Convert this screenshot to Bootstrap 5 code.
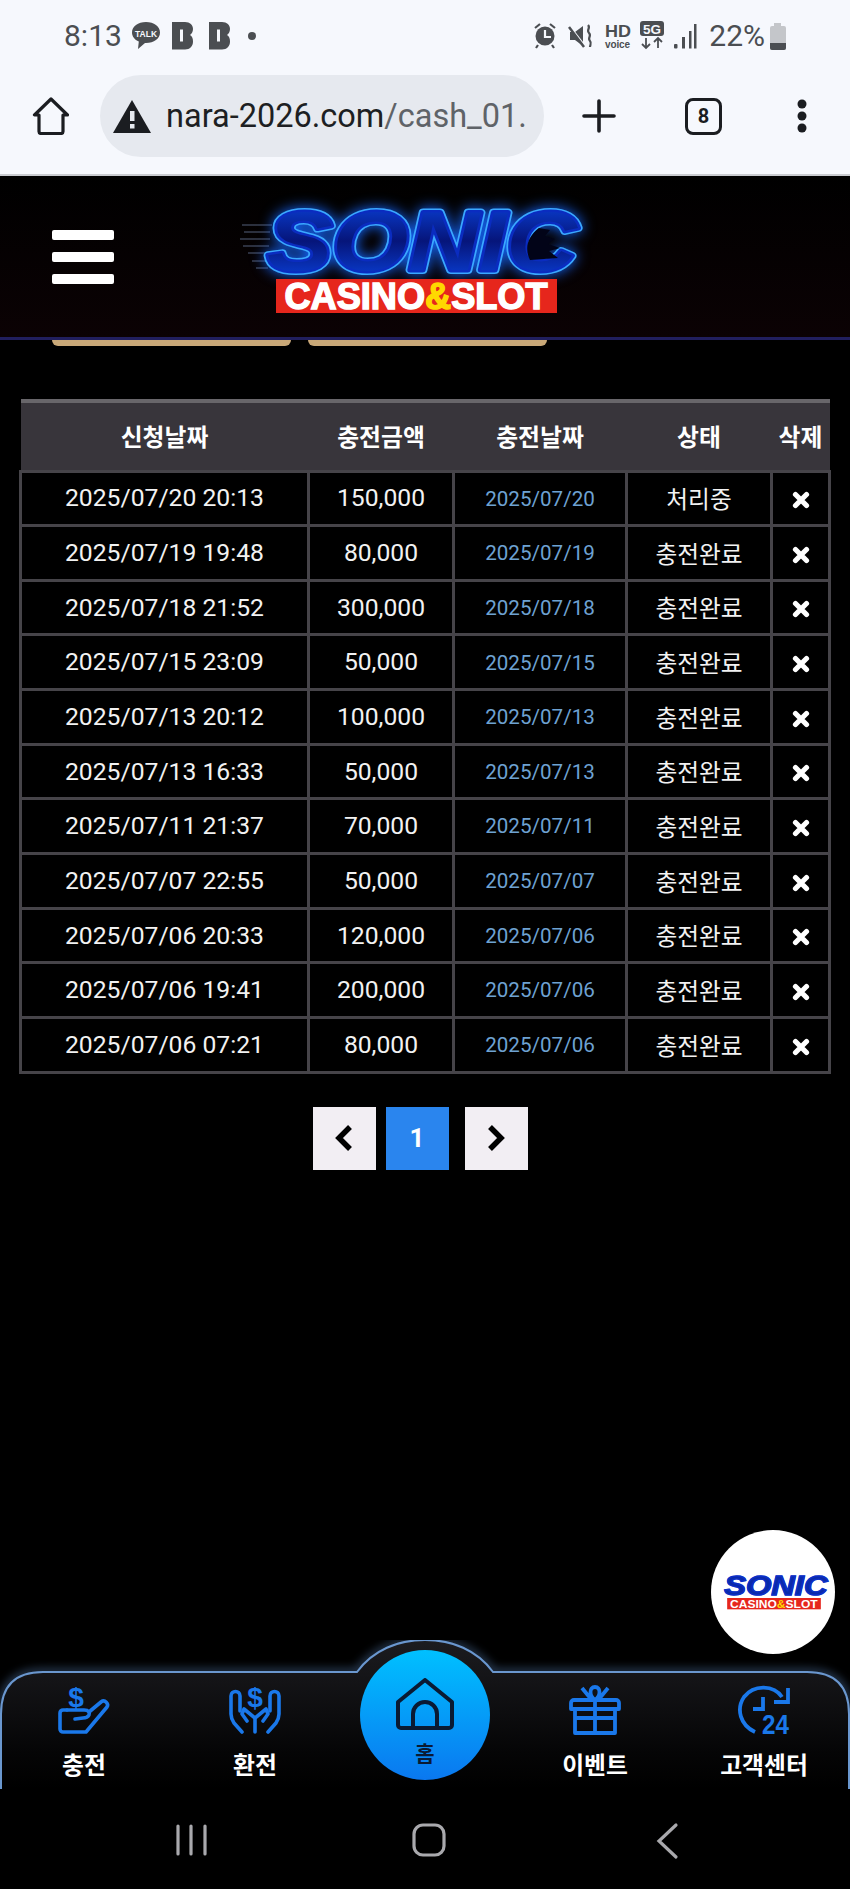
<!DOCTYPE html>
<html lang="ko">
<head>
<meta charset="UTF-8" />
<meta name="viewport" content="width=device-width, initial-scale=1" />
<title>Sonic Casino - 충전내역</title>
<link href="https://cdn.jsdelivr.net/npm/bootstrap@5.3.0/dist/css/bootstrap.min.css" rel="stylesheet" />
<style>
    body { background: #000; font-family: Roboto, "Noto Sans CJK KR", sans-serif; height: 1889px; overflow: hidden; }
    .shell { height: 1889px; }

    /* phone + browser chrome */
    .phone-top { background: #f6f8fd; height: 176px; border-bottom: 2px solid #c9cbd0; color: #4b4e52; }
    .status-row { height: 72px; padding: 0 63px 0 64px; }
    .clock { font-size: 30px; line-height: 1; }
    .battery-txt { font-size: 30px; line-height: 1; margin-left: 11px; }
    .tool-row { height: 82px; margin-top: 3px; padding-left: 32px; color: #1b1d21; }
    .url-pill { width: 444px; height: 82px; background: #e6e9ef; border-radius: 41px; margin-left: 30px; padding-left: 13px; overflow: hidden; }
    .url-txt { font-size: 32.5px; white-space: nowrap; color: #1d1f23; margin-left: 15px; }
    .url-txt span { color: #5f6368; }
    .tool-plus { margin-left: 38px; }
    .tab-count { width: 37px; height: 37px; margin-left: 69px; border: 3.5px solid #1b1d21; border-radius: 8px; font-size: 20px; font-weight: 700; color: #1b1d21; }
    .tool-dots { margin-left: 74px; }

    /* site header */
    .site-head { height: 164px; background: linear-gradient(#000, #0b0204); border-bottom: 3px solid #211f5e; padding-left: 52px; }
    .burger { width: 62px; }
    .burger i { display: block; height: 10px; background: #fff; border-radius: 2px; }
    .burger i + i { margin-top: 12px; }
    .head-logo { margin-left: 126px; margin-top: 8px; overflow: visible; }

    .tab-stubs { padding-left: 52px; gap: 17px; }
    .tab-stubs i { display: block; width: 239px; height: 6px; background: #c9a878; border-radius: 0 0 8px 8px; }

    /* table */
    .list-wrap { padding: 53px 0 0 19px; }
    .cash-table { table-layout: fixed; width: 809px; margin: 0; border-collapse: collapse; --bs-table-bg: #000; --bs-table-color: #fff; --bs-table-border-color: #464449; }
    .cash-table th { background: #38353b; color: #fff; border: 0; border-top: 4px solid #68666a; border-bottom: 3px solid #464449; height: 70px; font-size: 23.8px; font-weight: 700; padding: 0; vertical-align: middle; font-family: "Noto Sans CJK KR", sans-serif; }
    .cash-table td { height: 54.66px; border: 3px solid #464449; padding: 1px 0 0; font-size: 24.7px; color: #f2f2f2; line-height: 1; }
    .cash-table .apply-day { font-size: 20.6px; color: #6ea2d2; }
    .cash-table .stat { font-size: 23.7px; font-family: "Noto Sans CJK KR", sans-serif; }
    .c-a { width: 288px; } .c-b { width: 145px; } .c-c { width: 173px; } .c-d { width: 145px; } .c-e { width: 58px; }

    .pager { margin-top: 33px; padding-right: 29px; }
    .pg-box { width: 63px; height: 63px; background: #f2eef3; color: #000; }
    .pg-on { background: #2a85ee; color: #fff; font-size: 26px; font-weight: 700; margin: 0 16px 0 10px; }

    /* logo layers */
    .sonic-glow { filter: drop-shadow(0 0 7px #1466ff); }

    /* bottom nav */
    .float-logo { position: absolute; left: 711px; top: 1530px; width: 124px; height: 124px; background: #fff; border-radius: 50%; }
    .float-logo svg { overflow: visible; }
    .bottom-nav { position: relative; height: 149px; }
    .nav-shape { position: absolute; left: 0; top: 0; }
    .nav-items { position: relative; height: 149px; }
    .nav-cell { position: absolute; top: 45px; width: 170px; color: #fff; font-size: 23.8px; font-weight: 700; font-family: "Noto Sans CJK KR", sans-serif; text-align: center; line-height: 1; }
    .nav-cell svg { display: block; margin: 0 auto 17px; overflow: visible; }
    .n1 { left: -1px; } .n2 { left: 170px; } .n3 { left: 510px; } .n4 { left: 679px; }
    .home-ball { position: absolute; left: 360px; top: 10px; width: 130px; height: 130px; border-radius: 50%; background: linear-gradient(#00c0ff, #0a78f0); color: #0a1a33; font-size: 21px; font-weight: 700; font-family: "Noto Sans CJK KR", sans-serif; text-align: center; line-height: 1; padding-top: 28px; }
    .home-ball svg { display: block; margin: 0 auto 10px; }
    .sys-nav { height: 100px; }
</style>
</head>
<body>
<svg width="0" height="0" class="position-absolute">
    <symbol id="xmark" viewBox="0 0 18 18"><path d="M3.5 3.5 14.5 14.5M14.5 3.5 3.5 14.5" stroke="#fff" stroke-width="5.2" stroke-linecap="round" fill="none"/></symbol>
    <linearGradient id="sonicFill" x1="0" y1="0" x2="0" y2="1">
        <stop offset="0" stop-color="#0a47e6"/><stop offset=".5" stop-color="#06157a"/><stop offset="1" stop-color="#0a47e6"/>
    </linearGradient>
</svg>

<div class="shell d-flex flex-column">

    <div class="phone-top flex-shrink-0">
        <div class="status-row d-flex align-items-center justify-content-between">
            <div class="d-flex align-items-center">
                <span class="clock">8:13</span>
                <svg width="140" height="32" viewBox="0 0 140 32" class="ms-2">
                    <path d="M16 2C8 2 2 6.500 2 12.500c0 4 2.700 7.300 6.800 9L8 29l7-6h1c8 0 14-4.500 14-10.500S24 2 16 2z" fill="#4b4e52"/>
                    <text x="16" y="16.500" text-anchor="middle" font-family="Liberation Sans" font-size="8.500" font-weight="700" fill="#f6f8fd">TALK</text>
                    <path d="M42 2h13c5 0 8 3 8 7 0 3-1.500 5-3 6 2 1 3 3.500 3 6.500 0 4.500-3 8-8 8H42zM50 9.500v12h3v-12z" fill="#4b4e52" fill-rule="evenodd"/>
                    <path d="M79 2h13c5 0 8 3 8 7 0 3-1.500 5-3 6 2 1 3 3.500 3 6.500 0 4.500-3 8-8 8H79zM87 9.500v12h3v-12z" fill="#4b4e52" fill-rule="evenodd"/>
                    <circle cx="122" cy="16" r="4" fill="#4b4e52"/>
                </svg>
            </div>
            <div class="d-flex align-items-center">
                <svg width="164" height="30" viewBox="0 0 164 30" fill="#4b4e52">
                    <circle cx="11" cy="15" r="9.500"/><path d="M11 9v7h6" stroke="#f6f8fd" stroke-width="2.200" fill="none"/>
                    <path d="M1 7l5-4M21 7l-5-4M4 24l-2 3M18 24l2 3" stroke="#4b4e52" stroke-width="2.200"/>
                    <path d="M36 11h5l8-6v20l-8-6h-5z"/><path d="M35 4l17 22" stroke="#f6f8fd" stroke-width="1.500"/><path d="M35 6l15 20" stroke="#4b4e52" stroke-width="2.500"/>
                    <path d="M54 4c3 3-2 5 1 8 3 3-2 5 1 8 2 2 0 4 0 6" stroke="#4b4e52" stroke-width="2.200" fill="none"/>
                    <text x="71" y="16" font-family="Liberation Sans" font-size="17" font-weight="700" textLength="26" lengthAdjust="spacingAndGlyphs">HD</text>
                    <text x="71" y="27" font-family="Liberation Sans" font-size="10" font-weight="700" textLength="25">voice</text>
                    <rect x="106" y="0" width="24" height="15" rx="3"/>
                    <text x="118" y="12.500" text-anchor="middle" font-family="Liberation Sans" font-size="13.500" font-weight="700" fill="#f6f8fd">5G</text>
                    <path d="M112 17v10m-4-4 4 4 4-4M124 27V17m-4 4 4-4 4 4" stroke="#4b4e52" stroke-width="1.800" fill="none"/>
                    <rect x="140" y="23" width="3.500" height="4.500" rx="1"/><rect x="148" y="16" width="3" height="11.500"/><rect x="155" y="10" width="2.500" height="17.500"/><rect x="160" y="3" width="2.500" height="24.500"/>
                </svg>
                <span class="battery-txt">22%</span>
                <svg width="18" height="27" viewBox="0 0 18 27" class="ms-1"><path d="M5 0h7v3h3a2 2 0 0 1 2 2v20a2 2 0 0 1-2 2H3a2 2 0 0 1-2-2V5a2 2 0 0 1 2-2h2z" fill="#c4c6ca"/><path d="M1 20h16v5a2 2 0 0 1-2 2H3a2 2 0 0 1-2-2z" fill="#4b4e52"/></svg>
            </div>
        </div>
        <div class="tool-row d-flex align-items-center position-relative">
            <svg width="38" height="38" viewBox="0 0 38 38" class="flex-shrink-0" fill="none" stroke="#1b1d21" stroke-width="3.200" stroke-linejoin="round"><path d="M19 2 2.500 18H7v16.500a2 2 0 0 0 2 2h20a2 2 0 0 0 2-2V18h4.500z"/></svg>
            <div class="url-pill d-flex align-items-center flex-shrink-0">
                <svg width="38" height="33" viewBox="0 0 38 33" class="flex-shrink-0"><path d="M19 0 38 33H0z" fill="#1b1d21"/><rect x="17" y="11" width="4.500" height="10" fill="#e6e9ef"/><rect x="17" y="24" width="4.500" height="4.500" fill="#e6e9ef"/></svg>
                <div class="url-txt">nara-2026.com<span>/cash_01.</span></div>
            </div>
            <svg width="34" height="34" viewBox="0 0 34 34" class="flex-shrink-0 tool-plus" stroke="#1b1d21" stroke-width="3.600" stroke-linecap="round"><path d="M17 2v30M2 17h30"/></svg>
            <div class="tab-count d-flex align-items-center justify-content-center flex-shrink-0">8</div>
            <svg width="12" height="34" viewBox="0 0 12 34" class="flex-shrink-0 tool-dots" fill="#1b1d21"><circle cx="6" cy="5" r="4.500"/><circle cx="6" cy="17" r="4.500"/><circle cx="6" cy="29" r="4.500"/></svg>
        </div>
    </div>

    <header class="site-head d-flex align-items-center flex-shrink-0">
        <div class="burger"><i></i><i></i><i></i></div>
        <svg class="head-logo" width="350" height="120" viewBox="0 0 350 120">
            <g stroke="#55607a" stroke-width="1"><path d="M2 24h30M4 31h26M0 38h30M3 45h26M8 52h20M12 60h14M16 67h12"/></g>
            <g class="sonic-glow"><use href="#sonicWord" stroke="#3aa8ff" stroke-width="8" stroke-linejoin="round" fill="#3aa8ff"/></g>
            <use href="#sonicWord" stroke="#0a2cc0" stroke-width="5" stroke-linejoin="round" fill="url(#sonicFill)"/>
            <text id="sonicWord" x="27" y="69" font-family="Liberation Sans" font-weight="700" font-style="italic" font-size="84" textLength="310" lengthAdjust="spacingAndGlyphs" fill="url(#sonicFill)">SONIC</text>
            <path d="M299 27l11 2-5 6 10 3-7 5 12 4-11 3 9 7-28 2c-6-12-2-24 9-32z" fill="#020418"/>
            <rect x="36" y="78" width="281" height="34" fill="#e6261c"/>
            <text x="176" y="108" text-anchor="middle" font-family="Liberation Sans" font-weight="700" font-size="37" textLength="263" lengthAdjust="spacingAndGlyphs" fill="#fff" stroke="#fff" stroke-width="1.500">CASINO<tspan fill="#ffd800" stroke="#ffd800">&amp;</tspan>SLOT</text>
        </svg>
    </header>

    <main class="flex-grow-1">
        <div class="tab-stubs d-flex"><i></i><i></i></div>
        <div class="list-wrap">
            <table class="table cash-table text-center align-middle">
                <colgroup><col class="c-a"><col class="c-b"><col class="c-c"><col class="c-d"><col class="c-e"></colgroup>
                <thead>
                    <tr><th>신청날짜</th><th>충전금액</th><th>충전날짜</th><th>상태</th><th>삭제</th></tr>
                </thead>
                <tbody>
                    <tr><td>2025/07/20 20:13</td><td>150,000</td><td class="apply-day">2025/07/20</td><td class="stat">처리중</td><td><svg width="18" height="18"><use href="#xmark"/></svg></td></tr>
                    <tr><td>2025/07/19 19:48</td><td>80,000</td><td class="apply-day">2025/07/19</td><td class="stat">충전완료</td><td><svg width="18" height="18"><use href="#xmark"/></svg></td></tr>
                    <tr><td>2025/07/18 21:52</td><td>300,000</td><td class="apply-day">2025/07/18</td><td class="stat">충전완료</td><td><svg width="18" height="18"><use href="#xmark"/></svg></td></tr>
                    <tr><td>2025/07/15 23:09</td><td>50,000</td><td class="apply-day">2025/07/15</td><td class="stat">충전완료</td><td><svg width="18" height="18"><use href="#xmark"/></svg></td></tr>
                    <tr><td>2025/07/13 20:12</td><td>100,000</td><td class="apply-day">2025/07/13</td><td class="stat">충전완료</td><td><svg width="18" height="18"><use href="#xmark"/></svg></td></tr>
                    <tr><td>2025/07/13 16:33</td><td>50,000</td><td class="apply-day">2025/07/13</td><td class="stat">충전완료</td><td><svg width="18" height="18"><use href="#xmark"/></svg></td></tr>
                    <tr><td>2025/07/11 21:37</td><td>70,000</td><td class="apply-day">2025/07/11</td><td class="stat">충전완료</td><td><svg width="18" height="18"><use href="#xmark"/></svg></td></tr>
                    <tr><td>2025/07/07 22:55</td><td>50,000</td><td class="apply-day">2025/07/07</td><td class="stat">충전완료</td><td><svg width="18" height="18"><use href="#xmark"/></svg></td></tr>
                    <tr><td>2025/07/06 20:33</td><td>120,000</td><td class="apply-day">2025/07/06</td><td class="stat">충전완료</td><td><svg width="18" height="18"><use href="#xmark"/></svg></td></tr>
                    <tr><td>2025/07/06 19:41</td><td>200,000</td><td class="apply-day">2025/07/06</td><td class="stat">충전완료</td><td><svg width="18" height="18"><use href="#xmark"/></svg></td></tr>
                    <tr><td>2025/07/06 07:21</td><td>80,000</td><td class="apply-day">2025/07/06</td><td class="stat">충전완료</td><td><svg width="18" height="18"><use href="#xmark"/></svg></td></tr>
                </tbody>
            </table>
            <div class="pager d-flex justify-content-center">
                <div class="pg-box d-flex align-items-center justify-content-center"><svg width="20" height="28" viewBox="0 0 20 28" fill="none" stroke="#000" stroke-width="5.500"><path d="M16 3 5 14l11 11"/></svg></div>
                <div class="pg-box pg-on d-flex align-items-center justify-content-center">1</div>
                <div class="pg-box d-flex align-items-center justify-content-center"><svg width="20" height="28" viewBox="0 0 20 28" fill="none" stroke="#000" stroke-width="5.500"><path d="M4 3l11 11L4 25"/></svg></div>
            </div>
        </div>
    </main>

    <div class="float-logo d-flex align-items-center justify-content-center">
        <svg width="117" height="40" viewBox="0 0 350 120">
            <use href="#miniWord" stroke="#2a6cf0" stroke-width="9" stroke-linejoin="round" opacity=".6"/>
            <text id="miniWord" x="27" y="69" font-family="Liberation Sans" font-weight="700" font-style="italic" font-size="84" textLength="310" lengthAdjust="spacingAndGlyphs" fill="#0b2aa8" stroke="#0b2fc8" stroke-width="4">SONIC</text>
            <rect x="36" y="78" width="281" height="34" fill="#e6261c"/>
            <text x="176" y="107" text-anchor="middle" font-family="Liberation Sans" font-weight="700" font-size="35" textLength="263" lengthAdjust="spacingAndGlyphs" fill="#fff">CASINO<tspan fill="#ffd800">&amp;</tspan>SLOT</text>
        </svg>
    </div>

    <nav class="bottom-nav flex-shrink-0">
        <svg class="nav-shape" width="850" height="149" viewBox="0 0 850 149">
            <defs>
                <linearGradient id="panelFill" x1="0" y1="0" x2="0" y2="1"><stop offset="0" stop-color="#1c1c20"/><stop offset=".75" stop-color="#050506"/><stop offset="1" stop-color="#000"/></linearGradient>
                <filter id="edgeGlow" x="-5%" y="-20%" width="110%" height="140%"><feGaussianBlur stdDeviation="5"/></filter>
            </defs>
            <path d="M1 149V74Q1 32 43 32H357C373 10 398 0 425 0S477 10 493 32H807Q849 32 849 74V149" fill="none" stroke="#6fa0e0" stroke-width="5" opacity=".55" filter="url(#edgeGlow)"/>
            <path d="M1 149V74Q1 32 43 32H357C373 10 398 0 425 0S477 10 493 32H807Q849 32 849 74V149Z" fill="url(#panelFill)"/>
            <path d="M1 149V74Q1 32 43 32H357C373 10 398 0 425 0S477 10 493 32H807Q849 32 849 74V149" fill="none" stroke="#6a97cf" stroke-width="2"/>
        </svg>
        <div class="nav-items">
            <a class="nav-cell n1 text-decoration-none">
                <svg width="52" height="50" viewBox="0 0 52 50" fill="none" stroke="#1a78ea" stroke-width="3.600" stroke-linecap="round" stroke-linejoin="round">
                    <text x="18" y="22" text-anchor="middle" font-family="Liberation Sans" font-size="28" font-weight="700" fill="#1a78ea" stroke="none">$</text>
                    <path d="M9 25H5a3 3 0 0 0-3 3v16a3 3 0 0 0 3 3h23L49 22c2-3-2-8-6-5L31 27"/><path d="M9 25h17c5 0 6 3 5 5s-3 3-6 3l-8 1"/>
                </svg>
                충전
            </a>
            <a class="nav-cell n2 text-decoration-none">
                <svg width="52" height="50" viewBox="0 0 52 50" fill="none" stroke="#1a78ea" stroke-width="3.600" stroke-linecap="round" stroke-linejoin="round">
                    <text x="26" y="22" text-anchor="middle" font-family="Liberation Sans" font-size="28" font-weight="700" fill="#1a78ea" stroke="none">$</text>
                    <path d="M13 47 5 38c-2-3-3-5-3-9V11c0-6 9-6 9 0v15M39 47l8-9c2-3 3-5 3-9V11c0-6-9-6-9 0v15"/>
                    <path d="M26 47V33L15 24l-2 5 5 7M26 33l11-9 2 5-5 7"/>
                </svg>
                환전
            </a>
            <a class="nav-cell n3 text-decoration-none">
                <svg width="52" height="50" viewBox="0 0 52 50" fill="none" stroke="#1a78ea" stroke-width="3.800" stroke-linejoin="round">
                    <path d="M6 24v24h40V24M2 24v-6a3 3 0 0 1 3-3h42a3 3 0 0 1 3 3v6zM26 15v33M6 33h40"/>
                    <path d="M26 15c-6-4-6-13 0-13s6 9 0 13zM13 3l9 11M39 3l-9 11"/>
                </svg>
                이벤트
            </a>
            <a class="nav-cell n4 text-decoration-none">
                <svg width="52" height="50" viewBox="0 0 52 50" fill="none" stroke="#1a78ea" stroke-width="3.800">
                    <path d="M44 12C36 0 16-1 6 12c-8 12-4 28 11 35"/><path d="M50 3v14H36"/><path d="M25 12v12H15"/>
                    <text x="24" y="49" font-family="Liberation Sans" font-size="28" font-weight="700" fill="#1a78ea" stroke="none" textLength="27" lengthAdjust="spacingAndGlyphs">24</text>
                </svg>
                고객센터
            </a>
            <a class="home-ball text-decoration-none">
                <svg width="58" height="54" viewBox="0 0 58 54" fill="none" stroke="#0a1a33" stroke-width="4" stroke-linejoin="round"><path d="M29 2 2 24v23a3 3 0 0 0 3 3h48a3 3 0 0 0 3-3V24z"/><path d="M17 50V36a12 12 0 0 1 24 0v14"/></svg>
                홈
            </a>
        </div>
    </nav>

    <div class="sys-nav flex-shrink-0">
        <svg width="850" height="100" viewBox="0 0 850 100" fill="none" stroke="#a9a9ad" stroke-width="3.200" stroke-linecap="round">
            <path d="M178 37v28M191 37v28M205 37v28"/>
            <rect x="414" y="36" width="30" height="30" rx="9"/>
            <path d="M676 36 659 52l17 16"/>
        </svg>
    </div>
</div>
</body>
</html>
